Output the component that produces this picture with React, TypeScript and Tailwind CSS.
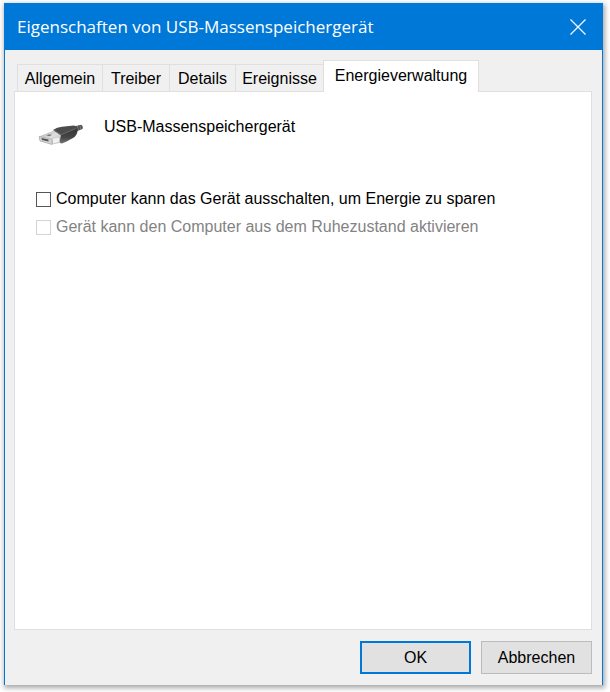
import { useState } from 'react';

const tabs = [
  { label: 'Allgemein', width: 'w-[85px]' },
  { label: 'Treiber', width: 'w-[67px]' },
  { label: 'Details', width: 'w-[66px]' },
  { label: 'Ereignisse', width: 'w-[88px]' },
  { label: 'Energieverwaltung', width: 'w-[156px]' },
];

function UsbIcon() {
  return (
    <svg viewBox="0 0 48 28" className="h-7 w-12 shrink-0" aria-hidden="true">
      <defs>
        <linearGradient id="metal" x1="0" y1="0" x2="1" y2="1">
          <stop offset="0" stopColor="#a8a8a8" />
          <stop offset="0.5" stopColor="#dedede" />
          <stop offset="1" stopColor="#b0b0b0" />
        </linearGradient>
        <linearGradient id="side" x1="0" y1="0" x2="0" y2="1">
          <stop offset="0" stopColor="#353535" />
          <stop offset="0.6" stopColor="#454545" />
          <stop offset="1" stopColor="#777777" />
        </linearGradient>
      </defs>
      {/* cable */}
      <path d="M38 5.500 L45 3.800 Q47.500 5 46.500 8 L40 10.500 Z" fill="#505050" />
      <path d="M41.500 5 L42.300 9.300 M44 4.500 L44.800 8.500" stroke="#8a8a8a" strokeWidth="0.8" />
      {/* metal sleeve */}
      <path d="M3 15.500 L18 9.500 L26 13 L25 21.500 L16 23.500 L4 20 Z" fill="url(#metal)" />
      <path d="M3 15.500 L16 18.200 L16 23.500 L4 20 Z" fill="#d3d3d3" stroke="#999999" strokeWidth="0.5" />
      <path d="M5.500 17 L12.500 18.600 L12.500 20.600 L6 19 Z" fill="#555555" />
      <path d="M10.500 14.500 L13.500 13.200 L16 14 L13 15.200 Z" fill="#777777" />
      <path d="M17 18 L23 16.500 L23 21 L17 22.500 Z" fill="#f0f0f0" />
      {/* plug body */}
      <path d="M17 9 Q21 6.300 26 5.800 L38 4.500 Q41 5 41.500 7.500 L25 14.500 Z" fill="#4c4c4c" />
      <path d="M25 14 L41.500 7 Q42 12.500 39 15.500 Q36 18 26 22.500 Q23.500 22.800 24 19 Z" fill="url(#side)" />
      <path d="M18 9 L25 13.700 L40.500 7.300" fill="none" stroke="#777777" strokeWidth="0.6" />
    </svg>
  );
}

export default function App() {
  const [active, setActive] = useState('Energieverwaltung');
  const [powerOff, setPowerOff] = useState(false);

  return (
    <div className="flex min-h-screen bg-white pt-[3px] pr-[7px] pb-[7px] pl-1 font-['Liberation_Sans',Arial,sans-serif] text-base leading-5 text-black">
      <div className="flex flex-1 flex-col border-x border-[#0078d7] bg-[#f0f0f0] shadow-[1px_2px_5px_1px_rgba(0,0,0,0.35)]">
        <header className="flex h-[47px] items-center justify-between bg-[#0078d7] pr-4 pl-3 text-white">
          <h1 className="font-['Open_Sans','Noto_Sans',sans-serif] text-[17px] leading-6">
            Eigenschaften von USB-Massenspeichergerät
          </h1>
          <button type="button" aria-label="Schließen">
            <svg viewBox="0 0 16 16" className="size-4" fill="none" stroke="currentColor" strokeWidth="1.2">
              <path d="M0.500 0.500 L15.500 15.500 M15.500 0.500 L0.500 15.500" />
            </svg>
          </button>
        </header>

        <main className="flex flex-1 flex-col pt-[10px] pr-[10px] pl-[9px]">
          <div role="tablist" className="-mb-px flex items-end pl-[3px]">
            {tabs.map((t) => (
              <button
                key={t.label}
                type="button"
                role="tab"
                aria-selected={active === t.label}
                onClick={() => setActive(t.label)}
                className={`${t.width} border-t border-[#dfdfdf] whitespace-nowrap ${
                  active === t.label
                    ? 'z-10 h-8 border-x bg-white pb-0.5'
                    : 'h-7 border-b border-l bg-[#f0f0f0] pt-0.5'
                }`}
              >
                {t.label}
              </button>
            ))}
          </div>

          <section role="tabpanel" className="flex-1 border border-[#dfdfdf] bg-white px-[21px] pt-[25px]">
            <div className="flex items-start gap-5">
              <div className="pt-1">
                <UsbIcon />
              </div>
              <p>USB-Massenspeichergerät</p>
            </div>

            <div className="mt-10 flex flex-col gap-2">
              <label className="flex items-center gap-[5px]">
                <input
                  type="checkbox"
                  checked={powerOff}
                  onChange={(e) => setPowerOff(e.target.checked)}
                  className="size-[15px] shrink-0 appearance-none border border-[#555555] bg-white checked:bg-[#0078d7]"
                />
                Computer kann das Gerät ausschalten, um Energie zu sparen
              </label>
              <label className="flex items-center gap-[5px] text-[#838383]">
                <input
                  type="checkbox"
                  disabled
                  className="size-[15px] shrink-0 appearance-none border border-[#d4d4d4] bg-white"
                />
                Gerät kann den Computer aus dem Ruhezustand aktivieren
              </label>
            </div>
          </section>
        </main>

        <footer className="flex justify-end gap-[10px] px-[10px] py-[11px]">
          <button type="button" className="h-[33px] w-[111px] border-2 border-[#0078d7] bg-[#e1e1e1]">
            OK
          </button>
          <button type="button" className="h-[33px] w-[111px] border border-[#bcbcbc] bg-[#e1e1e1]">
            Abbrechen
          </button>
        </footer>
      </div>
    </div>
  );
}
